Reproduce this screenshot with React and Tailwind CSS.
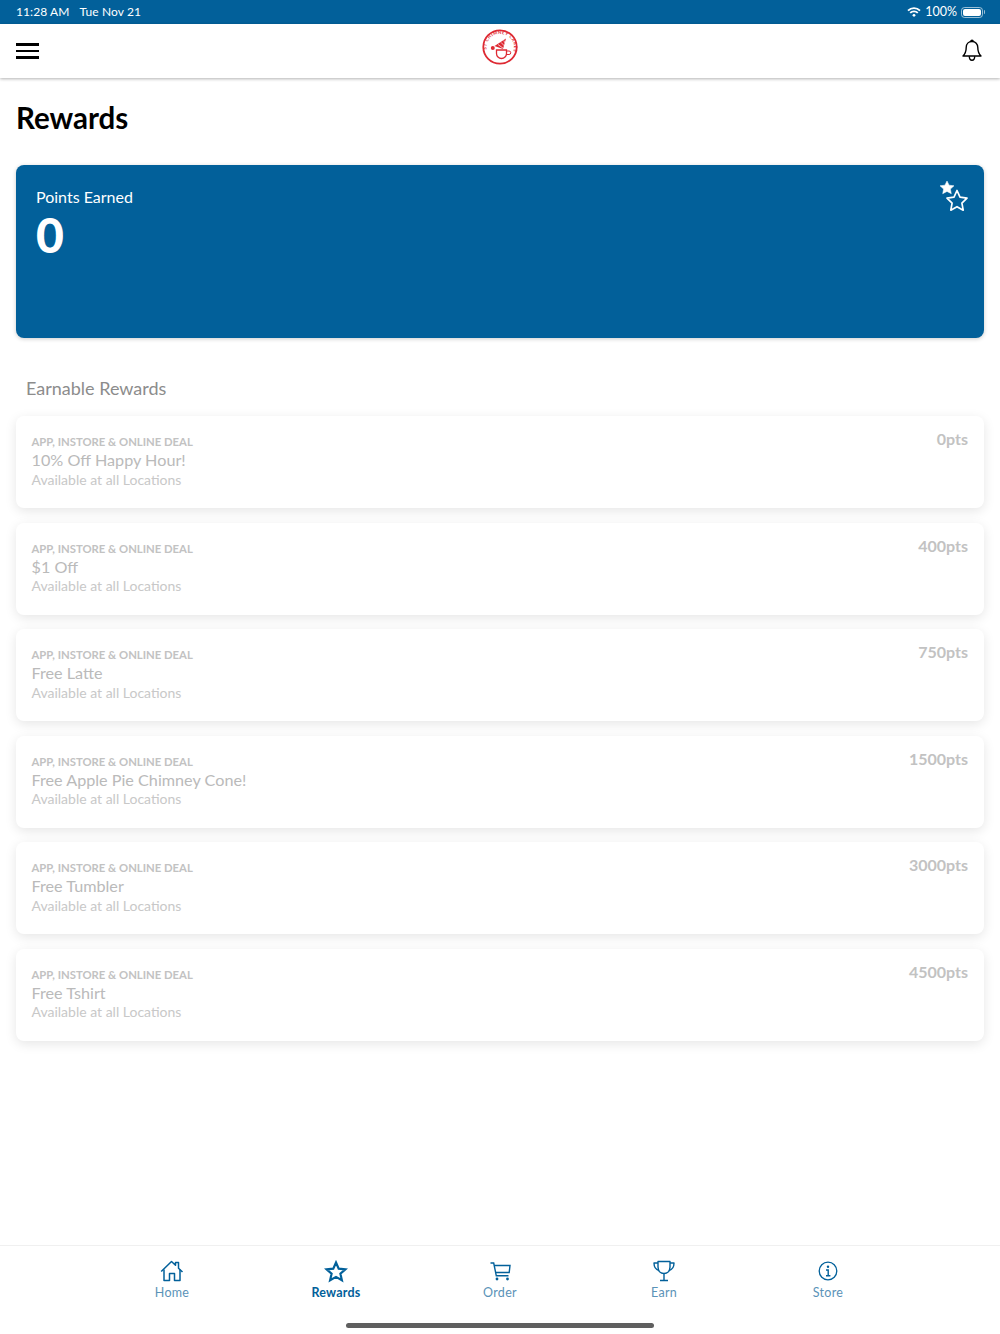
const rewards = [
  { title: "10% Off Happy Hour!", pts: "0pts" },
  { title: "$1 Off", pts: "400pts" },
  { title: "Free Latte", pts: "750pts" },
  { title: "Free Apple Pie Chimney Cone!", pts: "1500pts" },
  { title: "Free Tumbler", pts: "3000pts" },
  { title: "Free Tshirt", pts: "4500pts" },
];

function Logo() {
  return (
    <svg width="36" height="36" viewBox="0 0 36 36" fill="none" stroke="#de2a33">
      <circle cx="18" cy="18" r="16.700" strokeWidth="1.800" />
      <path id="logo-arc" d="M5.500 24a13.800 13.800 0 1 1 25.500 0" stroke="none" />
      <text fontSize="4.300" fontWeight="700" fill="#de2a33" stroke="none" letterSpacing="0.500">
        <textPath href="#logo-arc" startOffset="7%">ST CHIMNEY CAKES</textPath>
      </text>
      <path d="M12.500 17L24 9.500 21 20z" fill="#de2a33" stroke="none" />
      <path d="M16 15.500l5.500 4M19 13.400l3.500 3.600M21.800 11.500l1.400 3" stroke="#fff" strokeWidth="0.700" />
      <circle cx="10.800" cy="19" r="2" fill="#de2a33" stroke="none" />
      <path d="M14.500 21h10v3.500a5 5 0 0 1-10 0z" strokeWidth="1.300" />
      <path d="M24.500 22h2.500a1.600 1.600 0 0 1 0 3.500h-3" strokeWidth="1" />
    </svg>
  );
}

function Wifi() {
  return (
    <svg width="14" height="10" viewBox="0 0 14 10" fill="none" stroke="#fff" strokeWidth="1.900">
      <path d="M1 3.600a8.600 8.600 0 0 1 12 0" />
      <path d="M3.200 5.900a5.400 5.400 0 0 1 7.600 0" />
      <circle cx="7" cy="8.300" r="1.400" fill="#fff" stroke="none" />
    </svg>
  );
}

function Battery() {
  return (
    <div className="flex items-center gap-[1px]">
      <div className="flex h-[11px] w-[22px] items-center rounded-[3.500px] border border-white/60 p-[1px]">
        <div className="h-full w-full rounded-[2px] bg-white" />
      </div>
      <div className="h-[4px] w-[1px] rounded-r-sm bg-white/60" />
    </div>
  );
}

function Bell() {
  return (
    <svg width="20" height="23" viewBox="0 0 20 23" fill="none" stroke="#000" strokeWidth="1.400" strokeLinejoin="round">
      <path d="M10 2.500c-3.500 0-5.800 2.500-5.800 6 0 4-.9 6.200-3.200 8.500h18c-2.300-2.300-3.200-4.500-3.200-8.500 0-3.500-2.300-6-5.800-6z" />
      <path d="M8.800 2.500c0-1.600 2.400-1.600 2.400 0" />
      <path d="M7.300 17.200c0 2.700 1.100 4 2.700 4s2.700-1.300 2.700-4" />
    </svg>
  );
}

function Stars() {
  return (
    <svg width="32" height="34" viewBox="0 0 32 34" stroke="#fff">
      <path d="M8 1l2.100 4.200 4.900.6-3.600 3.300.9 4.600-4.300-2.300-4.300 2.300.9-4.600L1 5.800l4.900-.6z" fill="#fff" strokeWidth="0.500" />
      <path d="M18 10.500l3 6.600 7 1-5.100 5 1.300 7.100-6.200-3.500-6.200 3.500 1.300-7.100-5.100-5 7-1z" fill="none" strokeWidth="1.700" strokeLinejoin="round" />
    </svg>
  );
}

function HomeIcon() {
  return (
    <svg width="24" height="22" viewBox="0 0 24 22" fill="none" stroke="#02609a" strokeWidth="1.500" strokeLinejoin="round">
      <path d="M1.200 11.500L11.500 1.500l4 3.800V2.500h3v5.700l4 3.800" />
      <path d="M4 9.500v11h5.500v-7h5v7H20v-11" />
    </svg>
  );
}

function StarIcon() {
  return (
    <svg width="24" height="23" viewBox="0 0 24 23" fill="none" stroke="#02609a" strokeWidth="2.200" strokeLinejoin="miter">
      <path d="M12 2.500l2.700 6.100 6.800.7-5.100 4.400 1.500 6.600-5.900-3.400-5.900 3.400 1.500-6.600L2.500 9.300l6.800-.7z" />
    </svg>
  );
}

function CartIcon() {
  return (
    <svg width="21" height="19" viewBox="0 0 21 19" fill="none" stroke="#02609a" strokeWidth="1.400">
      <path d="M.500 1h3.200l2.600 12.800H18.500" />
      <path d="M4.200 3.500h15.800l-.8 7H5.600" />
      <circle cx="7" cy="17" r="1.400" fill="#02609a" stroke="none" />
      <circle cx="17.500" cy="17" r="1.400" fill="#02609a" stroke="none" />
    </svg>
  );
}

function TrophyIcon() {
  return (
    <svg width="22" height="22" viewBox="0 0 22 22" fill="none" stroke="#02609a" strokeWidth="1.400" strokeLinejoin="round">
      <path d="M5 1.500h12v5.500c0 4-2.500 6.500-6 6.500s-6-2.500-6-6.500z" />
      <path d="M5 3H1c0 4 1.500 6.500 5 7.500" />
      <path d="M17 3h4c0 4-1.500 6.500-5 7.500" />
      <path d="M11 13.500v6.500M7 20.500h8" />
    </svg>
  );
}

function InfoIcon() {
  return (
    <svg width="20" height="20" viewBox="0 0 20 20" fill="none" stroke="#02609a">
      <circle cx="10" cy="10" r="8.800" strokeWidth="1.300" />
      <circle cx="10" cy="5.800" r="1.200" fill="#02609a" stroke="none" />
      <path d="M8 9h2.200v5.500M8 14.700h4.400" strokeWidth="1.400" />
    </svg>
  );
}

function RewardCard({ title, pts }) {
  return (
    <div className="flex h-[92px] items-start justify-between rounded-lg bg-white pl-[15.500px] pr-4 pt-[15px] shadow-[0_3px_12px_rgba(0,0,0,0.1)]">
      <div>
        <p className="text-[11.300px] leading-[22px] font-bold text-[#c2c2c2]">APP, INSTORE & ONLINE DEAL</p>
        <p className="text-[16.200px] leading-[13px] text-[#bababa]">{title}</p>
        <p className="mt-[3.500px] text-[14px] leading-[19px] text-[#c8c8c8]">Available at all Locations</p>
      </div>
      <p className="text-[16px] leading-[16px] font-bold text-[#c2c2c2]">{pts}</p>
    </div>
  );
}

function Tab({ icon, label, active }) {
  return (
    <div className="flex w-[164px] flex-col items-center">
      <div className="flex h-[24px] items-center justify-center">{icon}</div>
      <span className={active ? "mt-[1px] text-[12.500px] leading-[18px] font-bold tracking-[0.2px] text-[#02609a]" : "mt-[1px] text-[12.500px] leading-[18px] tracking-[0.3px] text-[#5b93b8]"}>
        {label}
      </span>
    </div>
  );
}

export default function App() {
  return (
    <div className="flex min-h-[1334px] flex-col bg-white font-['Lato','Noto_Sans',sans-serif]">
      <div className="flex h-[24px] items-center justify-between bg-[#02609a] pl-4 pr-[15px] text-[12px] text-white">
        <div className="flex gap-[10px] tracking-[0.1px]">
          <span>11:28 AM</span>
          <span>Tue Nov 21</span>
        </div>
        <div className="flex items-center gap-[4px]">
          <Wifi />
          <span className="text-[12.500px]">100%</span>
          <Battery />
        </div>
      </div>

      <header className="flex h-[54px] items-center justify-between bg-white pl-4 pr-[18px] shadow-[0_1px_3px_rgba(0,0,0,0.3)]">
        <div className="flex w-[23px] flex-col gap-[4px]">
          <div className="h-[2.500px] bg-black" />
          <div className="h-[2.500px] bg-black" />
          <div className="h-[2.500px] bg-black" />
        </div>
        <div className="mb-[8px] mr-[2px]">
          <Logo />
        </div>
        <div className="mb-[2px]">
          <Bell />
        </div>
      </header>

      <main className="flex flex-col px-4">
        <h1 className="mt-[22px] text-[29.500px] leading-[36px] font-bold text-black">Rewards</h1>

        <section className="relative mt-[29px] h-[173px] rounded-lg bg-[#02609a] px-5 pt-[21px] text-white shadow-[0_1px_4px_rgba(0,0,0,0.2)]">
          <p className="text-[16px] leading-[22px]">Points Earned</p>
          <p className="text-[48px] leading-[54px] font-black">0</p>
          <div className="absolute right-[13px] top-[15px]">
            <Stars />
          </div>
        </section>

        <h2 className="mt-[37px] pl-[10px] text-[18px] leading-[26px] text-[#8c8c8c]">Earnable Rewards</h2>

        <div className="mt-[15px] flex flex-col gap-[14.500px]">
          {rewards.map((r) => (
            <RewardCard key={r.title} title={r.title} pts={r.pts} />
          ))}
        </div>
      </main>

      <footer className="mt-auto flex h-[89px] flex-col items-center border-t border-[#f0f0f0] bg-white pt-[13px]">
        <div className="flex w-[820px]">
          <Tab icon={<HomeIcon />} label="Home" />
          <Tab icon={<StarIcon />} label="Rewards" active />
          <Tab icon={<CartIcon />} label="Order" />
          <Tab icon={<TrophyIcon />} label="Earn" />
          <Tab icon={<InfoIcon />} label="Store" />
        </div>
        <div className="mt-[21px] h-[5px] w-[308px] rounded-full bg-[#5f5f5f]" />
      </footer>
    </div>
  );
}
